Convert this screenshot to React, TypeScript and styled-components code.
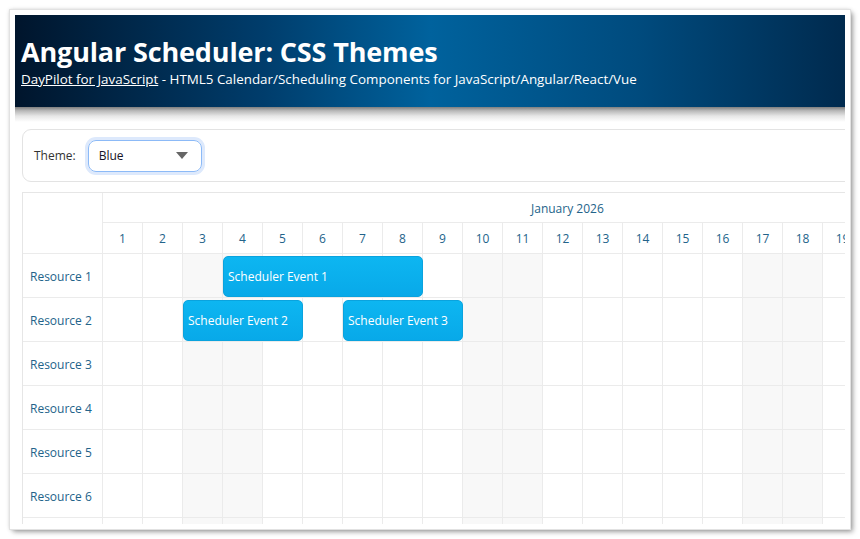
import React from "react";
import styled, { createGlobalStyle } from "styled-components";

const GlobalStyle = createGlobalStyle`
  html, body { margin: 0; padding: 0; background: #ffffff; }
  body { font-family: "Open Sans", "Noto Sans", sans-serif; }
  * { box-sizing: border-box; }
`;

const Window = styled.div`
  margin: 10px;
  width: 840px;
  height: 519px;
  padding: 5px;
  background: #ffffff;
  box-shadow: 0 0 0 1px #e2e2e2, 0 0 4px rgba(0, 0, 0, 0.25), 3px 3px 5px rgba(0, 0, 0, 0.35);
`;

const Inner = styled.div`
  width: 100%;
  height: 100%;
  overflow: hidden;
  display: flex;
  flex-direction: column;
`;

const Header = styled.header`
  flex: none;
  height: 92px;
  padding: 20px 6px 0;
  background: linear-gradient(90deg, #00152c 0%, #003d6c 30%, #00629d 50%, #004b7e 75%, #002a4e 100%);
  color: #ffffff;
`;

const Title = styled.h1`
  margin: 0;
  font-size: 27px;
  line-height: 34px;
  font-weight: 700;
  letter-spacing: -0.15px;
`;

const Subtitle = styled.div`
  font-size: 13.4px;
  line-height: 20px;
  a { color: #ffffff; text-decoration: underline; }
`;

const HeaderShadow = styled.div`
  flex: none;
  height: 15px;
  background: linear-gradient(180deg, #7e7e7e 0%, #b8b8b8 25%, #e6e6e6 60%, #ffffff 100%);
`;

const Toolbar = styled.div`
  flex: none;
  margin: 7px 0 0 7px;
  width: 900px;
  height: 53px;
  border: 1px solid #e3e3e3;
  border-radius: 9px;
  display: flex;
  align-items: center;
  padding-left: 11px;
  gap: 12px;
  font-size: 12px;
  color: #333333;
`;

const SelectBox = styled.div`
  width: 114px;
  height: 32px;
  border: 1px solid #8cbaf7;
  border-radius: 8px;
  box-shadow: 0 0 0 3px #dde9fc;
  display: flex;
  align-items: center;
  justify-content: space-between;
  padding: 0 13px 0 10px;
  color: #151526;
  font-size: 12px;
`;

const Caret = styled.span`
  width: 0;
  height: 0;
  border-left: 6px solid transparent;
  border-right: 6px solid transparent;
  border-top: 7px solid #666666;
`;

const Scheduler = styled.div`
  flex: none;
  margin: 10px 0 0 7px;
  border: 1px solid #e6e6e6;
  border-right: none;
  display: flex;
  width: 1400px;
  font-size: 12px;
  color: #23638a;
`;

const RowHeaders = styled.div`
  flex: none;
  width: 80px;
  border-right: 1px solid #ebebeb;
`;

const Corner = styled.div`
  height: 61px;
  border-bottom: 1px solid #ebebeb;
`;

const ResourceCell = styled.div`
  height: 44px;
  border-bottom: 1px solid #ebebeb;
  display: flex;
  align-items: center;
  padding: 2px 0 0 7px;
`;

const Timeline = styled.div`
  flex: none;
  display: flex;
  flex-direction: column;
`;

const MonthRow = styled.div`
  height: 30px;
  border-bottom: 1px solid #ebebeb;
  display: flex;
  align-items: center;
  padding: 2px 0 0 428px;
`;

const DayRow = styled.div`
  height: 31px;
  display: flex;
  border-bottom: 1px solid #ebebeb;
`;

const DayCell = styled.div`
  width: 40px;
  flex: none;
  border-right: 1px solid #ebebeb;
  display: flex;
  align-items: center;
  justify-content: center;
`;

const GridRow = styled.div`
  position: relative;
  height: 44px;
  display: flex;
  border-bottom: 1px solid #ebebeb;
`;

const GridCell = styled.div<{ $weekend: boolean }>`
  width: 40px;
  flex: none;
  border-right: 1px solid #ebebeb;
  background: ${(p) => (p.$weekend ? "#f8f8f8" : "#ffffff")};
`;

const Event = styled.div`
  position: absolute;
  top: 2px;
  height: 41px;
  border-radius: 5px;
  background: linear-gradient(180deg, #0db6f1 0%, #08a9e9 100%);
  border: 1px solid #0aa3de;
  color: #ffffff;
  display: flex;
  align-items: center;
  padding-left: 4px;
  font-size: 12px;
  white-space: nowrap;
`;

const days = Array.from({ length: 31 }, (_, i) => i + 1);
// Jan 1 2026 is Thursday; weekends: Sat/Sun
const isWeekend = (d: number) => {
  const dow = (4 + d - 1) % 7; // 0=Sun
  return dow === 0 || dow === 6;
};

const resources = ["Resource 1", "Resource 2", "Resource 3", "Resource 4", "Resource 5", "Resource 6", "Resource 7"];

const events = [
  { row: 0, start: 4, end: 8, text: "Scheduler Event 1" },
  { row: 1, start: 3, end: 5, text: "Scheduler Event 2" },
  { row: 1, start: 7, end: 9, text: "Scheduler Event 3" },
];

export default function App() {
  return (
    <>
      <GlobalStyle />
      <Window>
        <Inner>
          <Header>
            <Title>Angular Scheduler: CSS Themes</Title>
            <Subtitle>
              <a href="#">DayPilot for JavaScript</a> - HTML5 Calendar/Scheduling Components for JavaScript/Angular/React/Vue
            </Subtitle>
          </Header>
          <HeaderShadow />
          <Toolbar>
            <span>Theme:</span>
            <SelectBox>
              <span>Blue</span>
              <Caret />
            </SelectBox>
          </Toolbar>
          <Scheduler>
            <RowHeaders>
              <Corner />
              {resources.map((r) => (
                <ResourceCell key={r}>{r}</ResourceCell>
              ))}
            </RowHeaders>
            <Timeline>
              <MonthRow>January 2026</MonthRow>
              <DayRow>
                {days.map((d) => (
                  <DayCell key={d}>{d}</DayCell>
                ))}
              </DayRow>
              {resources.map((r, ri) => (
                <GridRow key={r}>
                  {days.map((d) => (
                    <GridCell key={d} $weekend={isWeekend(d)} />
                  ))}
                  {events
                    .filter((e) => e.row === ri)
                    .map((e) => (
                      <Event
                        key={e.text}
                        style={{ left: (e.start - 1) * 40, width: (e.end - e.start + 1) * 40 }}
                      >
                        {e.text}
                      </Event>
                    ))}
                </GridRow>
              ))}
            </Timeline>
          </Scheduler>
        </Inner>
      </Window>
    </>
  );
}
